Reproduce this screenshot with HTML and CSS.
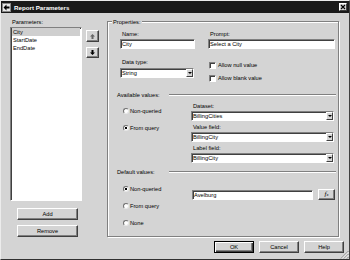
FILE: index.html
```html
<!DOCTYPE html>
<html>
<head>
<meta charset="utf-8">
<link rel="stylesheet" href="styles.css">
</head>
<body>
<div class="window">
  <div class="titlebar">
    <svg class="ticon" width="9" height="9" viewBox="0 0 9 9"><rect x="0" y="0" width="9" height="9" fill="#e8e8e8"/><rect x="0.5" y="0.5" width="8" height="8" fill="none" stroke="#888" stroke-width="1"/><path d="M1.5 4.5 L4.5 1.5 L4.5 3.5 L7.5 3.5 L7.5 5.5 L4.5 5.5 L4.5 7.5 Z" fill="#000"/></svg>
    <span class="ttext">Report Parameters</span>
    <span class="tclose"><svg width="6" height="6" viewBox="0 0 6 6"><path d="M1 1 L5 5 M5 1 L1 5" stroke="#000" stroke-width="1.2"/></svg></span>
  </div>
  <div class="main">
    <div class="left">
      <div class="plabel">Parameters:</div>
      <div class="listrow">
        <div class="list">
          <div class="item sel">City</div>
          <div class="item">StartDate</div>
          <div class="item">EndDate</div>
        </div>
        <div class="arrows">
          <div class="btn abtn up"><svg width="5" height="5" viewBox="0 0 5 5"><path d="M2.5 0 L5 2.5 L3.5 2.5 L3.5 5 L1.5 5 L1.5 2.5 L0 2.5 Z" fill="#666"/></svg></div>
          <div class="btn abtn down"><svg width="5" height="5" viewBox="0 0 5 5"><path d="M2.5 5 L5 2.5 L3.5 2.5 L3.5 0 L1.5 0 L1.5 2.5 L0 2.5 Z" fill="#000"/></svg></div>
        </div>
      </div>
      <div class="btn lbtn add">Add</div>
      <div class="btn lbtn rem">Remove</div>
    </div>
    <div class="props">
      <div class="plegend">Properties:</div>
      <div class="row1">
        <div class="col name"><div class="flabel">Name:</div><div class="input">City</div></div>
        <div class="col prompt"><div class="flabel">Prompt:</div><div class="input">Select a City</div></div>
      </div>
      <div class="row2">
        <div class="col dtype"><div class="flabel">Data type:</div><div class="select sel2"><span class="stext">String</span><span class="dd"></span></div></div>
        <div class="checks">
          <div class="check"><span class="cb"></span>Allow null value</div>
          <div class="check"><span class="cb"></span>Allow blank value</div>
        </div>
      </div>
      <div class="sect"><span class="slabel">Available values:</span><span class="sline"></span></div>
      <div class="avail">
        <div class="radios">
          <div class="radio"><span class="rb"></span>Non-queried</div>
          <div class="radio"><span class="rb on"></span>From query</div>
        </div>
        <div class="fields">
          <div class="flabel">Dataset:</div>
          <div class="select"><span class="stext">BillingCities</span><span class="dd"></span></div>
          <div class="flabel next">Value field:</div>
          <div class="select"><span class="stext">BillingCity</span><span class="dd"></span></div>
          <div class="flabel next">Label field:</div>
          <div class="select"><span class="stext">BillingCity</span><span class="dd"></span></div>
        </div>
      </div>
      <div class="sect def"><span class="slabel">Default values:</span><span class="sline"></span></div>
      <div class="defrow">
        <div class="radios dr">
          <div class="radio"><span class="rb on"></span>Non-queried</div>
          <div class="radio"><span class="rb"></span>From query</div>
          <div class="radio"><span class="rb"></span>None</div>
        </div>
        <div class="definput">
          <div class="input dval">Avelburg</div>
          <div class="btn fx"><i>f</i><span class="fxx">x</span></div>
        </div>
      </div>
    </div>
  </div>
  <div class="footer">
    <div class="btn fbtn okb">OK</div>
    <div class="btn fbtn">Cancel</div>
    <div class="btn fbtn">Help</div>
    <svg class="grip" width="9" height="9" viewBox="0 0 9 9"><path d="M8.5 1 L1 8.5 M8.5 4 L4 8.5 M8.5 7 L7 8.5" stroke="#808080" stroke-width="1"/><path d="M8.5 2 L2 8.5 M8.5 5 L5 8.5" stroke="#fff" stroke-width="0.8"/></svg>
  </div>
</div>
</body>
</html>
```
FILE: styles.css
```css
* { box-sizing: border-box; }
body {
  margin: 0;
  font-family: "Liberation Sans", Arial, sans-serif;
  font-size: 5.7px;
  color: #000;
}
.window {
  width: 350px;
  height: 260px;
  background: #d4d4d4;
  border: 1px solid;
  border-color: #ececec #404040 #303030 #ececec;
  display: flex;
  flex-direction: column;
}
.titlebar {
  height: 12px;
  flex: none;
  background: #1a1a1a;
  display: flex;
  align-items: center;
  color: #fff;
}
.ticon { margin-left: 1px; flex: none; display: block; }
.ttext {
  margin-left: 3px;
  font-weight: bold;
  font-size: 6.2px;
  flex: 1;
}
.tclose {
  width: 8px;
  height: 8px;
  margin-right: 2px;
  background: #d4d4d4;
  border: 1px solid;
  border-color: #fff #404040 #404040 #fff;
  display: flex;
  align-items: center;
  justify-content: center;
}
.tclose svg { display: block; }

.main { flex: 1; display: flex; }
.left { width: 89px; margin-left: 9px; flex: none; }
.plabel { margin-top: 5px; line-height: 9px; padding-left: 2px; }
.listrow { display: flex; gap: 4px; }
.list {
  width: 72px;
  height: 174px;
  background: #fff;
  border: 1px solid;
  border-color: #808080 #fff #fff #808080;
  box-shadow: inset 1px 1px #404040;
  padding: 0 1px;
}
.item { line-height: 8.2px; padding-left: 1px; }
.item.sel { background: #cfcfcf; }
.arrows { display: flex; flex-direction: column; gap: 5px; margin-top: 3px; }

.btn {
  background: #d4d4d4;
  border: 1px solid;
  border-color: #fff #404040 #404040 #fff;
  box-shadow: inset -1px -1px #808080;
  text-align: center;
}
.abtn {
  width: 13px;
  height: 12px;
  display: flex;
  align-items: center;
  justify-content: center;
}
.abtn.down { height: 11px; }
.abtn svg { display: block; }
.lbtn { width: 61px; height: 12px; line-height: 10px; margin-left: 7px; }
.add { margin-top: 7px; }
.rem { margin-top: 5px; }

.props {
  width: 232px;
  flex: none;
  margin: 8px 0 2px 8px;
  border: 1px solid #808080;
  box-shadow: inset 1px 1px #fff, 1px 1px #fff;
}
.plegend {
  width: max-content;
  margin: -4px 0 0 4px;
  padding: 0 1px;
  background: #d4d4d4;
  line-height: 8px;
  height: 8px;
}
.row1 { display: flex; margin-top: 4px; }
.col.name { margin-left: 12px; width: 75px; }
.col.prompt { margin-left: 13px; width: 127px; }
.flabel { line-height: 8px; height: 8px; padding-left: 2px; }
.flabel.next { margin-top: 2px; }
.input, .select {
  height: 10px;
  background: #fff;
  border: 1px solid;
  border-color: #808080 #fff #fff #808080;
  box-shadow: inset 1px 1px #404040;
  line-height: 8px;
  padding-left: 1px;
  white-space: nowrap;
}
.input { margin-top: 1px; }
.select { margin-top: 1px; display: flex; padding-right: 0; }
.select.sel2 { margin-top: 2px; }
.stext { flex: 1; }
.dd {
  width: 7px;
  height: 8px;
  flex: none;
  background: #d4d4d4;
  border: 1px solid;
  border-color: #fff #404040 #404040 #fff;
  display: flex;
  align-items: center;
  justify-content: center;
}
.dd::after {
  content: "";
  border-left: 2px solid transparent;
  border-right: 2px solid transparent;
  border-top: 2px solid #000;
}

.row2 { display: flex; align-items: flex-start; }
.dtype { margin: 9px 0 0 12px; width: 74px; }
.checks { margin: 12px 0 0 15px; display: flex; flex-direction: column; gap: 5px; }
.check { display: flex; align-items: center; height: 8px; line-height: 8px; }
.cb {
  width: 7px;
  height: 7px;
  margin-right: 2px;
  background: #fff;
  border: 1px solid;
  border-color: #808080 #fff #fff #808080;
  box-shadow: inset 1px 1px #404040;
}

.sect { display: flex; align-items: center; height: 8px; line-height: 8px; margin-top: 9px; }
.sect.def { margin-top: 5px; }
.slabel { width: 61px; padding-left: 9px; flex: none; }
.sline {
  flex: 1;
  height: 2px;
  border-top: 1px solid #808080;
  border-bottom: 1px solid #fff;
  margin-right: 2px;
}

.avail { display: flex; align-items: flex-start; }
.radios {
  width: 60px;
  margin: 8px 0 0 15px;
  display: flex;
  flex-direction: column;
  gap: 9px;
  flex: none;
}
.radios.dr { margin-top: 9px; }
.radio { display: flex; align-items: center; height: 8px; line-height: 8px; }
.rb {
  width: 6px;
  height: 6px;
  margin-right: 1px;
  border-radius: 50%;
  background: #fff;
  border: 1px solid;
  border-color: #707070 #e8e8e8 #e8e8e8 #707070;
}
.rb.on { background: radial-gradient(circle, #000 0, #000 1px, #fff 1.4px); }
.fields { margin: 3px 0 0 8px; width: 143px; }

.defrow { display: flex; align-items: flex-start; }
.definput { display: flex; align-items: flex-start; margin: 13px 0 0 9px; }
.dval { width: 121px; }
.fx {
  width: 17px;
  height: 11px;
  margin-left: 5px;
  line-height: 9px;
  font-family: "Liberation Serif", serif;
  font-size: 7px;
}
.fx i { font-style: italic; }
.fxx { font-size: 4.5px; font-style: italic; }

.footer {
  flex: none;
  height: 20px;
  display: flex;
  justify-content: flex-end;
  align-items: flex-start;
  gap: 5px;
  padding: 2px 5px 0 0;
  position: relative;
}
.fbtn { width: 40px; height: 12px; line-height: 10px; }
.okb {
  border-color: #000;
  box-shadow: inset 1px 1px #fff, inset -1px -1px #404040, inset -2px -2px #808080;
}
.grip { position: absolute; right: 0; bottom: 0; display: block; }
```
